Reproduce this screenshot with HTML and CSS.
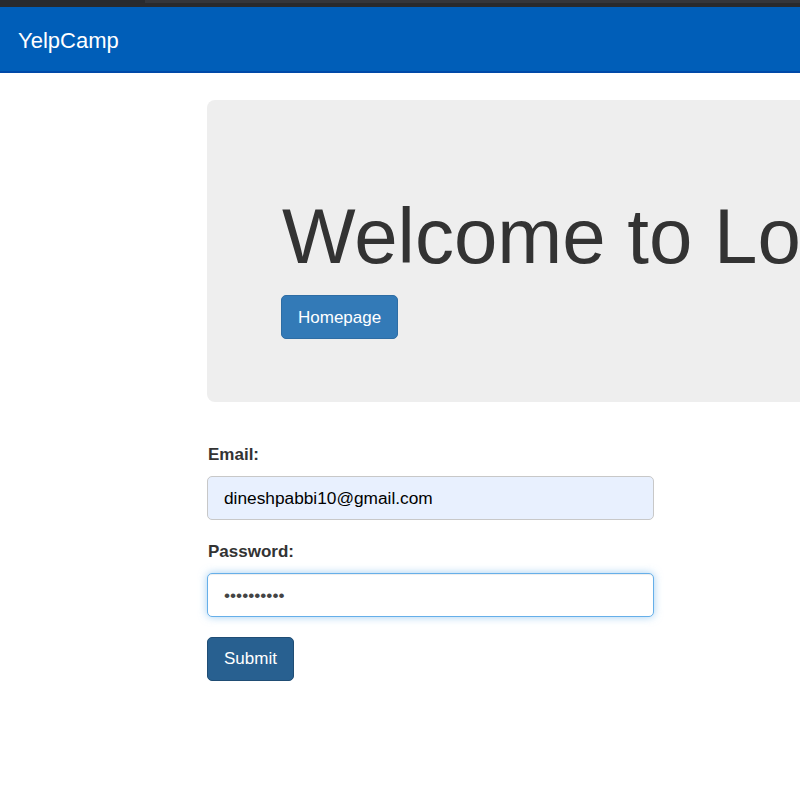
FILE: index.html
```html
<!DOCTYPE html>
<html lang="en">
<head>
<meta charset="utf-8">
<title>YelpCamp</title>
<link rel="stylesheet" href="styles.css">
</head>
<body>
<div class="chrome-strip"><div class="chrome-tab"></div></div>
<nav class="navbar">
  <a class="brand" href="#">YelpCamp</a>
</nav>
<main class="container">
  <section class="jumbotron">
    <h1 class="jumbo-title">Welcome to Login Page</h1>
    <a class="btn btn-primary" href="#">Homepage</a>
  </section>
  <form class="login-form">
    <div class="form-group">
      <label class="form-label" for="email">Email:</label>
      <input class="form-control autofilled" id="email" type="email" value="dineshpabbi10@gmail.com">
    </div>
    <div class="form-group">
      <label class="form-label" for="password">Password:</label>
      <input class="form-control focused" id="password" type="password" value="abcdefghij">
    </div>
    <button class="btn btn-submit" type="button">Submit</button>
  </form>
</main>
</body>
</html>
```

FILE: styles.css
```css
html, body {
  margin: 0;
  padding: 0;
  overflow: hidden;
  background: #ffffff;
}

body {
  font-family: "Liberation Sans", Arial, sans-serif;
  color: #333333;
  width: 800px;
  height: 800px;
}

.chrome-strip {
  height: 7px;
  background: #292a2d;
  display: flex;
  justify-content: flex-end;
}

.chrome-tab {
  width: 655px;
  height: 3px;
  background: #35363a;
}

.navbar {
  height: 64px;
  background: #005eb8;
  border-bottom: 2px solid #0049a8;
  display: flex;
  align-items: center;
  padding-left: 18px;
  box-sizing: content-box;
}

.brand {
  color: #ffffff;
  font-size: 22px;
  text-decoration: none;
  line-height: 1;
  margin-top: 4px;
}

.container {
  margin-left: 207px;
  padding-top: 27px;
}

.jumbotron {
  width: 900px;
  height: 302px;
  box-sizing: border-box;
  background: #eeeeee;
  border-radius: 8px;
  padding: 94px 0 0 75px;
}

.jumbo-title {
  margin: 0 0 15px 0;
  font-size: 78px;
  font-weight: normal;
  line-height: 1.1;
  color: #333333;
  white-space: nowrap;
}

.btn {
  display: inline-block;
  box-sizing: border-box;
  height: 44px;
  font-family: "Liberation Sans", Arial, sans-serif;
  font-size: 17px;
  line-height: 42px;
  color: #ffffff;
  text-decoration: none;
  border-radius: 5px;
  border: 1px solid transparent;
}

.btn-primary {
  background: #337ab7;
  border-color: #2e6da4;
  padding: 0 16px;
  margin-left: -1px;
  line-height: 44px;
}

.login-form {
  padding-top: 41px;
  width: 447px;
}

.form-group {
  display: flex;
  flex-direction: column;
  margin-bottom: 20px;
}

.form-label {
  font-size: 17px;
  font-weight: bold;
  line-height: 24px;
  margin-left: 1px;
  margin-bottom: 9px;
  color: #333333;
}

.form-control {
  box-sizing: border-box;
  height: 44px;
  width: 447px;
  border: 1px solid #c8c8c8;
  border-radius: 5px;
  padding: 0 16px;
  font-family: "Liberation Sans", Arial, sans-serif;
  font-size: 17.3px;
  color: #000000;
  outline: none;
  margin: 0;
}

.autofilled {
  background: #e8f0fe;
}

.focused {
  background: #ffffff;
  border-color: #66afe9;
  color: #444444;
  box-shadow: inset 0 1px 1px rgba(0, 0, 0, 0.075), 0 0 8px rgba(102, 175, 233, 0.6);
}

.btn-submit {
  background: #286090;
  border-color: #204d74;
  padding: 0 16px;
  height: 44px;
  cursor: pointer;
}
```
